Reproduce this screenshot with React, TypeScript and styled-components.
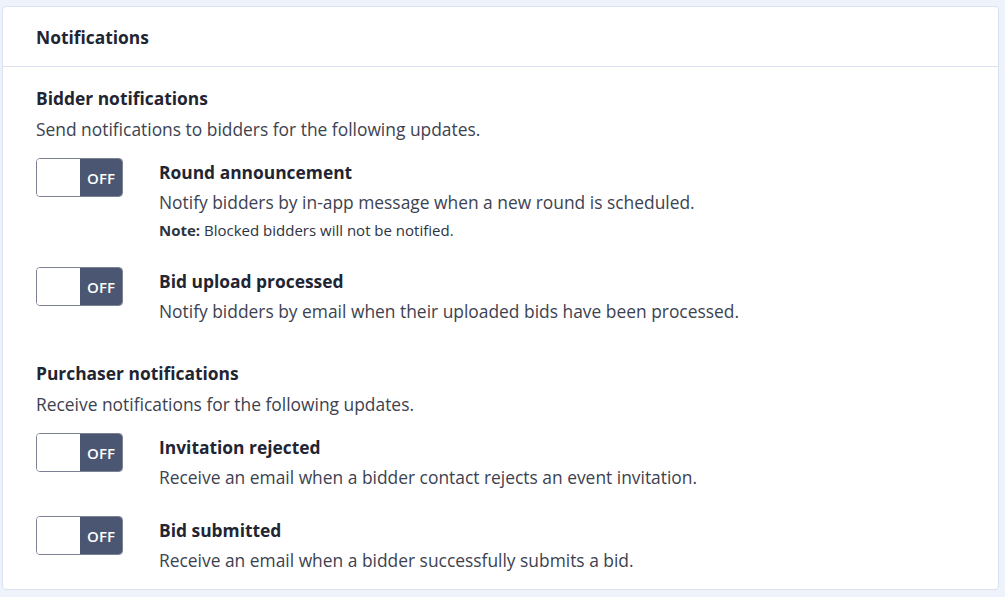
import React from "react";
import styled, { createGlobalStyle } from "styled-components";

const GlobalStyle = createGlobalStyle`
  html, body {
    margin: 0;
    padding: 0;
    background: #eef2fa;
    font-family: "Open Sans", "Noto Sans", sans-serif;
  }
`;

const Page = styled.div`
  padding: 6px 6px 7px 2px;
`;

const Card = styled.section`
  background: #ffffff;
  border: 1px solid #dbe2ef;
  border-radius: 4px;
`;

const CardHeader = styled.header`
  padding: 18px 33px 17px 33px;
  border-bottom: 1px solid #dbe2ef;
  font-size: 17.4px;
  line-height: 24px;
  font-weight: 700;
  color: #1f2533;
`;

const CardBody = styled.div`
  padding: 19px 33px 17px 33px;
  display: flex;
  flex-direction: column;
  gap: 38px;
`;

const Section = styled.div`
  display: flex;
  flex-direction: column;
`;

const SectionTitle = styled.h3`
  margin: 0;
  font-size: 17.4px;
  line-height: 24px;
  font-weight: 700;
  color: #1f2533;
`;

const SectionText = styled.p`
  margin: 7px 0 0;
  font-size: 17.4px;
  line-height: 24px;
  color: #3c4250;
`;

const Rows = styled.div`
  margin-top: 17px;
  display: flex;
  flex-direction: column;
  gap: 27px;
`;

const Row = styled.div`
  display: flex;
  align-items: flex-start;
  gap: 36px;
`;

const Toggle = styled.button`
  display: flex;
  width: 87px;
  height: 39px;
  padding: 0;
  border: 1px solid #7c8293;
  border-radius: 4px;
  overflow: hidden;
  background: #ffffff;
  cursor: pointer;
  flex-shrink: 0;
`;

const Knob = styled.span`
  width: 43px;
  height: 100%;
  background: #ffffff;
`;

const State = styled.span`
  flex: 1;
  display: flex;
  align-items: center;
  justify-content: center;
  background: #4b5673;
  color: #ffffff;
  font-family: "Open Sans", sans-serif;
  font-size: 15px;
  font-weight: 600;
`;

const RowText = styled.div`
  display: flex;
  flex-direction: column;
  padding-top: 2px;
`;

const RowTitle = styled.div`
  font-size: 17.4px;
  line-height: 24px;
  font-weight: 700;
  color: #1f2533;
`;

const RowDesc = styled.div`
  margin-top: 6px;
  font-size: 17.4px;
  line-height: 24px;
  color: #3c4250;
`;

const Note = styled.div`
  margin-top: 6px;
  font-size: 15px;
  line-height: 20px;
  color: #2d3340;

  strong {
    font-weight: 700;
  }
`;

type Item = { title: string; desc: string; note?: string };

const sections: { title: string; text: string; items: Item[] }[] = [
  {
    title: "Bidder notifications",
    text: "Send notifications to bidders for the following updates.",
    items: [
      {
        title: "Round announcement",
        desc: "Notify bidders by in-app message when a new round is scheduled.",
        note: "Blocked bidders will not be notified.",
      },
      {
        title: "Bid upload processed",
        desc: "Notify bidders by email when their uploaded bids have been processed.",
      },
    ],
  },
  {
    title: "Purchaser notifications",
    text: "Receive notifications for the following updates.",
    items: [
      {
        title: "Invitation rejected",
        desc: "Receive an email when a bidder contact rejects an event invitation.",
      },
      {
        title: "Bid submitted",
        desc: "Receive an email when a bidder successfully submits a bid.",
      },
    ],
  },
];

export default function App() {
  return (
    <Page>
      <GlobalStyle />
      <Card>
        <CardHeader>Notifications</CardHeader>
        <CardBody>
          {sections.map((s) => (
            <Section key={s.title}>
              <SectionTitle>{s.title}</SectionTitle>
              <SectionText>{s.text}</SectionText>
              <Rows>
                {s.items.map((it) => (
                  <Row key={it.title}>
                    <Toggle type="button" aria-pressed={false}>
                      <Knob />
                      <State>OFF</State>
                    </Toggle>
                    <RowText>
                      <RowTitle>{it.title}</RowTitle>
                      <RowDesc>{it.desc}</RowDesc>
                      {it.note && (
                        <Note>
                          <strong>Note:</strong> {it.note}
                        </Note>
                      )}
                    </RowText>
                  </Row>
                ))}
              </Rows>
            </Section>
          ))}
        </CardBody>
      </Card>
    </Page>
  );
}
